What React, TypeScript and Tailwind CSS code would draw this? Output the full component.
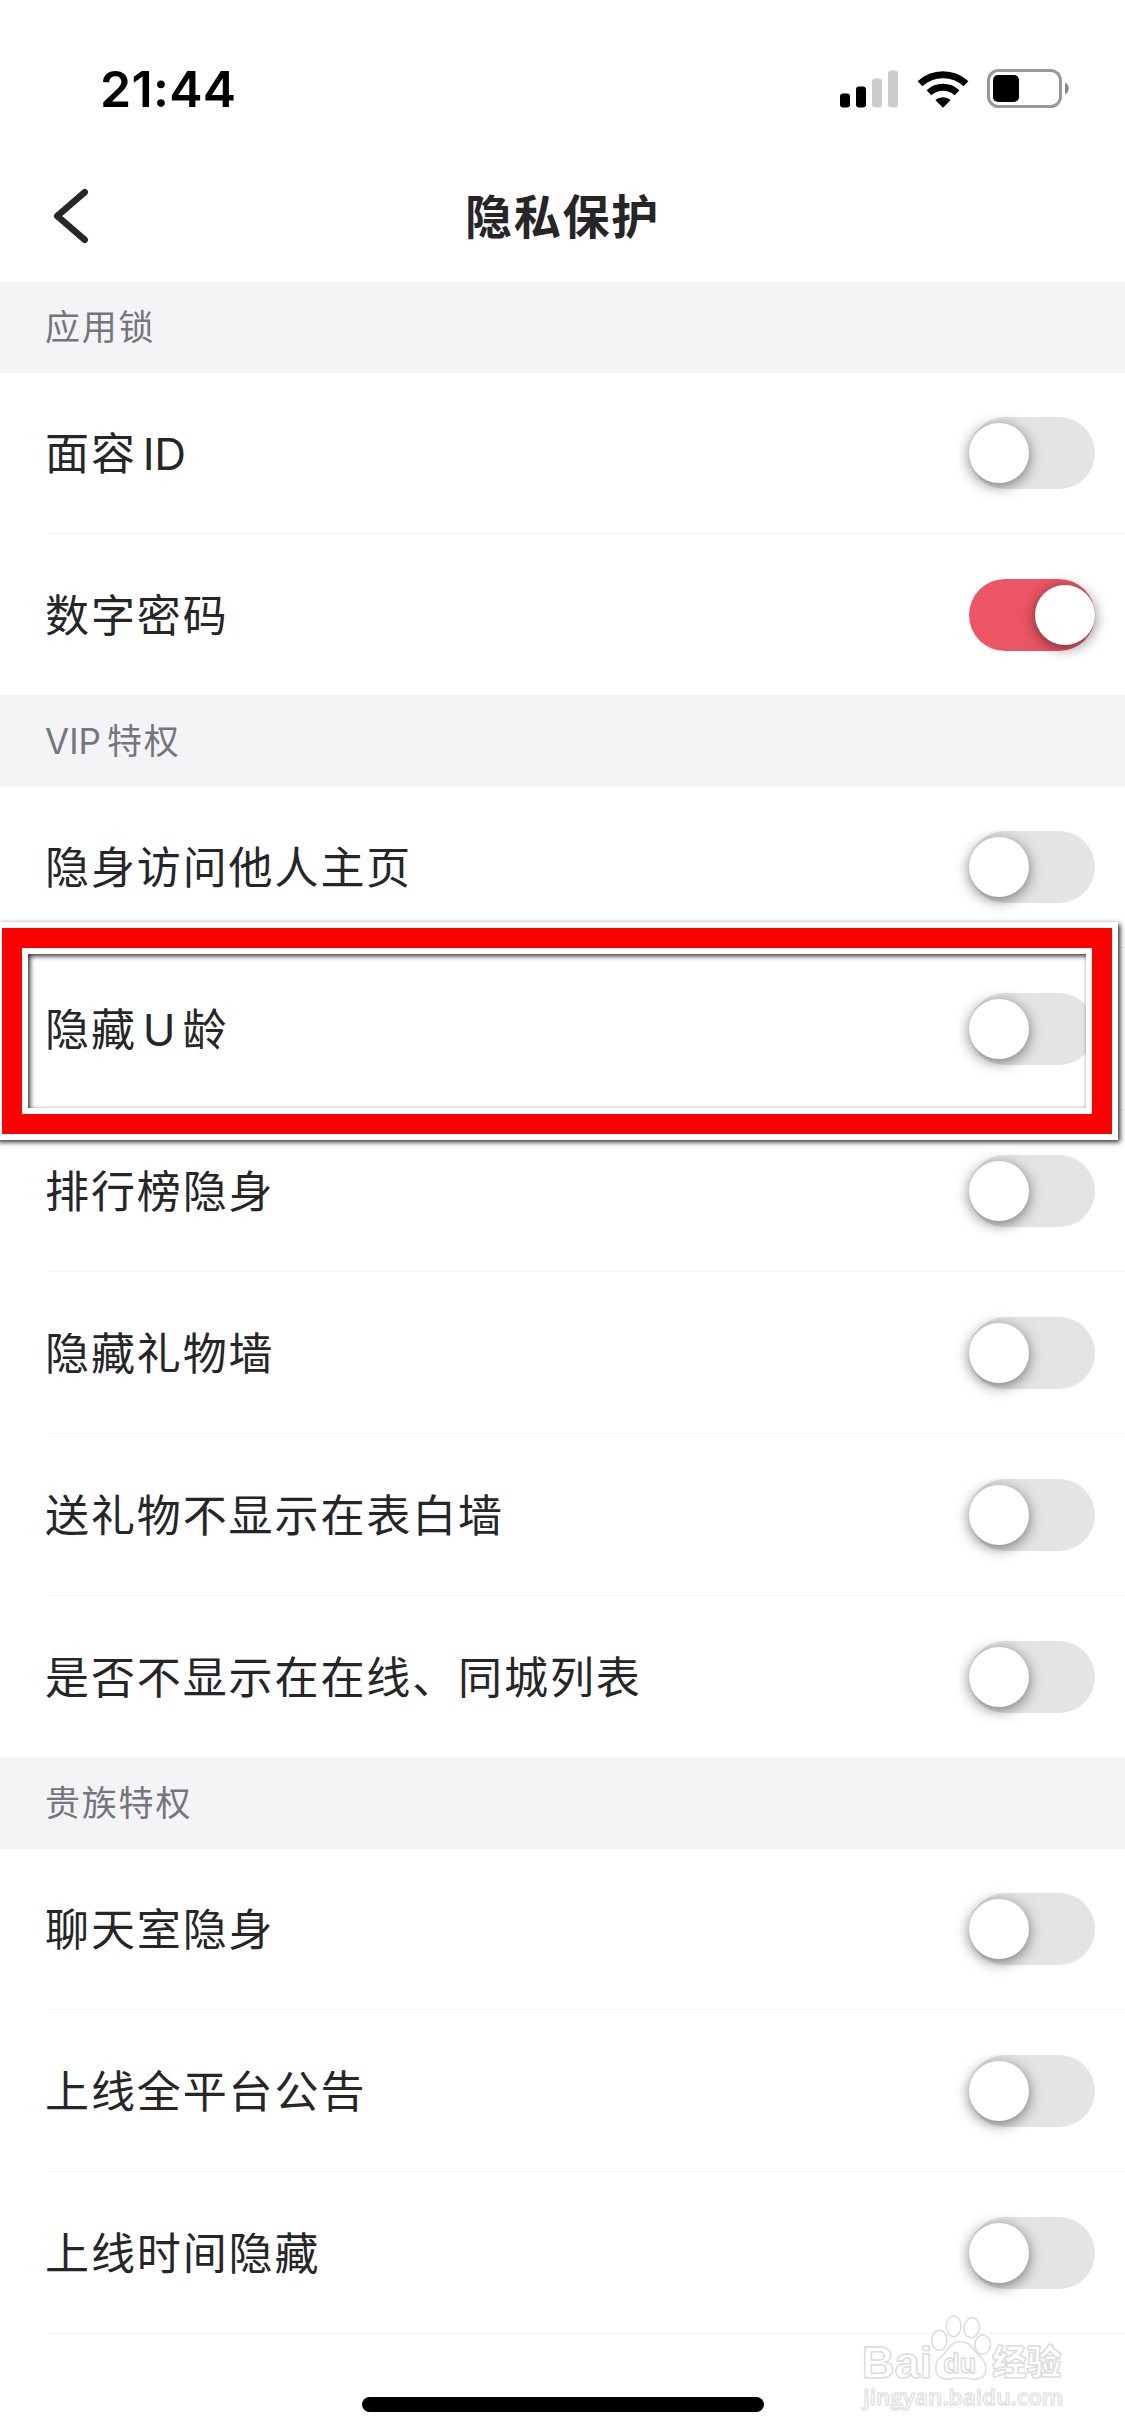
import React, { useState } from 'react';

interface SettingItem {
    id: string;
    label: React.ReactNode;
    on?: boolean;
}

interface SettingSection {
    id: string;
    title: React.ReactNode;
    items: SettingItem[];
}

// Latin runs get a little breathing room next to the Chinese glyphs
const SECTIONS: SettingSection[] = [
    {
        id: 'lock',
        title: '应用锁',
        items: [
            { id: 'face', label: <>面容<span className="ml-[6px] tracking-[-0.5px]">ID</span></> },
            { id: 'passcode', label: '数字密码', on: true },
        ],
    },
    {
        id: 'vip',
        title: <><span className="mr-[6px] tracking-[0px]">VIP</span>特权</>,
        items: [
            { id: 'visit', label: '隐身访问他人主页' },
            { id: 'age', label: <>隐藏<span className="mr-[5px] ml-[6px]">U</span>龄</> },
            { id: 'rank', label: '排行榜隐身' },
            { id: 'gift-wall', label: '隐藏礼物墙' },
            { id: 'gift', label: '送礼物不显示在表白墙' },
            { id: 'nearby', label: '是否不显示在在线、同城列表' },
        ],
    },
    {
        id: 'noble',
        title: '贵族特权',
        items: [
            { id: 'room', label: '聊天室隐身' },
            { id: 'notice', label: '上线全平台公告' },
            { id: 'time', label: '上线时间隐藏' },
        ],
    },
];

const StatusBar: React.FC = () => (
    <div className="flex h-[150px] items-center justify-between pt-[27px] pr-[56px] pl-[100px]">
        <span className="text-[50px] leading-none font-semibold tracking-[0.3px] text-black">21:44</span>
        <div className="flex items-center">
            <svg width="58" height="38" viewBox="0 0 58 38" className="mr-[19px]">
                <rect x="0" y="23.5" width="10" height="14" rx="3" fill="#000" />
                <rect x="16" y="16.5" width="10" height="21" rx="3" fill="#000" />
                <rect x="32" y="8.5" width="10" height="29" rx="3" fill="#ccc" />
                <rect x="48" y="0.5" width="10" height="37" rx="3" fill="#ccc" />
            </svg>
            <svg width="52" height="38" viewBox="0 0 52 38" className="mr-[18px]">
                <path d="M3 13.8a33.5 33.5 0 0 1 46 0" fill="none" stroke="#000" strokeWidth="7" />
                <path d="M12 22.7a20.5 20.5 0 0 1 28 0" fill="none" stroke="#000" strokeWidth="7" />
                <path d="M18.3 30a12 12 0 0 1 15.4 0L26 37.8z" fill="#000" />
            </svg>
            <svg width="82" height="39" viewBox="0 0 82 39">
                <rect x="1.5" y="1.5" width="72" height="36" rx="10" fill="none" stroke="#999" strokeWidth="3" />
                <rect x="6" y="6" width="26" height="27" rx="5" fill="#000" />
                <path d="M78 13.5c5 2.5 5 9.5 0 12z" fill="#888" />
            </svg>
        </div>
    </div>
);

const NavBar: React.FC = () => (
    <div className="grid h-[132px] grid-cols-[120px_1fr_120px] items-center">
        <button className="pl-[52px]">
            <svg width="38" height="56" viewBox="0 0 38 56" fill="none" stroke="#28282a" strokeWidth="6.5" strokeLinecap="round" strokeLinejoin="round">
                <path d="M32.7 4.2 5.2 28l27.500 23.8" />
            </svg>
        </button>
        <h1 className="text-center text-[47px] leading-none font-bold tracking-[1.8px] text-[#262628]">隐私保护</h1>
    </div>
);

const Toggle: React.FC<{ on: boolean; onChange: () => void }> = ({ on, onChange }) => (
    <button
        role="switch"
        aria-checked={on}
        onClick={onChange}
        className={`flex h-[72px] w-[126px] items-center rounded-full ${on ? 'justify-end bg-[#ec5565]' : 'justify-start bg-[#e4e4e4]'}`}
    >
        <span className="size-[60px] rounded-full bg-white shadow-[0_3px_14px_rgba(0,0,0,0.5)]" />
    </button>
);

// Thick red marker drawn over the highlighted row
const Highlight: React.FC = () => (
    <div className="pointer-events-none absolute top-[922px] left-[-4px] h-[218px] w-[1122px] border-[6px] border-white shadow-[2px_2px_5px_rgba(0,0,0,0.85)]">
        <div className="h-full w-full border-[20px] border-[#fe0000]">
            <div className="h-full w-full border-[6px] border-white">
                <div className="h-full w-full shadow-[inset_2px_2px_5px_rgba(0,0,0,0.85)]" />
            </div>
        </div>
    </div>
);

const Watermark: React.FC = () => (
    <svg
        className="pointer-events-none absolute right-0 bottom-0"
        width="295"
        height="156"
        viewBox="0 0 885 468"
        fill="#fff"
        stroke="#dcdcdc"
        strokeWidth="4.5"
        strokeLinejoin="round"
    >
        <text x="95" y="293" fontFamily="'Liberation Sans', sans-serif" fontWeight="700" fontSize="134" textLength="212" lengthAdjust="spacingAndGlyphs">Bai</text>
        <ellipse cx="328" cy="181" rx="23" ry="30" />
        <ellipse cx="371" cy="139" rx="22" ry="31" />
        <ellipse cx="425" cy="143" rx="23" ry="30" transform="rotate(8 425 143)" />
        <ellipse cx="458" cy="194" rx="23" ry="29" />
        <path d="M392 185c-30 0-36 24-52 38-14 12-24 22-23 44 2 26 22 33 40 30 24-4 46-4 70 0 22 3 40-6 41-30 1-20-10-32-24-44-16-14-22-38-52-38z" />
        <text x="340" y="280" fontFamily="'Liberation Sans', sans-serif" fontWeight="700" fontSize="84" textLength="98" lengthAdjust="spacingAndGlyphs">du</text>
        <text x="486" y="286" fontFamily="'Noto Sans CJK SC', sans-serif" fontWeight="900" fontSize="105" textLength="208" lengthAdjust="spacingAndGlyphs">经验</text>
        <text x="100" y="375" fontFamily="'Open Sans', sans-serif" fontWeight="600" fontSize="66" strokeWidth="4" stroke="#e2e2e2" textLength="600" lengthAdjust="spacingAndGlyphs">jingyan.baidu.com</text>
    </svg>
);

const App: React.FC = () => {
    const [values, setValues] = useState<Record<string, boolean>>(() =>
        Object.fromEntries(SECTIONS.flatMap(s => s.items.map(i => [i.id, !!i.on])))
    );

    const toggle = (id: string) => setValues(prev => ({ ...prev, [id]: !prev[id] }));

    return (
        <div className="relative flex h-[2436px] w-[1125px] flex-col overflow-hidden bg-white font-[Inter,'Noto_Sans_CJK_SC',sans-serif]">
            <StatusBar />
            <NavBar />

            {SECTIONS.map((section, sIdx) => (
                <section key={section.id}>
                    <h2 className={`flex items-center bg-[#f4f4f7] pl-[45px] text-[35px] tracking-[1.8px] text-[#74767b] ${sIdx === 0 ? 'h-[91px]' : 'h-[92px]'}`}>
                        <span>{section.title}</span>
                    </h2>
                    {section.items.map((item, idx) => {
                        const isLast = idx === section.items.length - 1 && sIdx < SECTIONS.length - 1;
                        return (
                            <div key={item.id}>
                                <div className="flex h-[160px] items-center justify-between pr-[30px] pl-[45px]">
                                    <span className="pt-[2px] text-[44px] leading-none tracking-[1.9px] text-[#262628]">{item.label}</span>
                                    <Toggle on={values[item.id]} onChange={() => toggle(item.id)} />
                                </div>
                                {!isLast && <div className="mb-px ml-[48px] h-px bg-[#f3f3f5]" />}
                            </div>
                        );
                    })}
                </section>
            ))}

            <div className="mx-auto mt-auto mb-[24px] h-[15px] w-[402px] rounded-full bg-black" />

            <Highlight />
            <Watermark />
        </div>
    );
};

export default App;
